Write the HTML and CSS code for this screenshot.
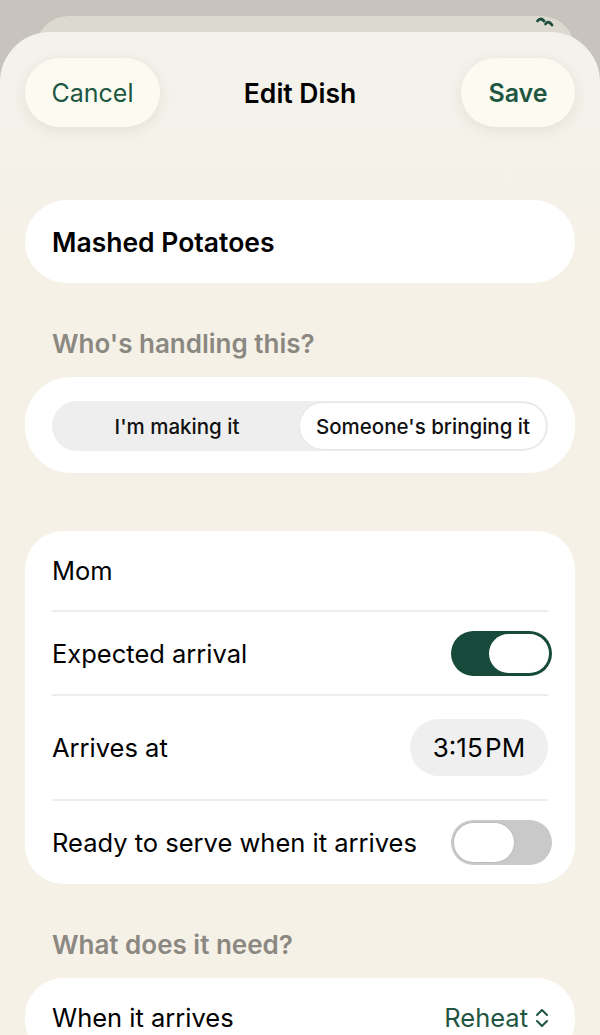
FILE: index.html
```html
<!DOCTYPE html>
<html lang="en">
<head>
  <meta charset="UTF-8" />
  <meta name="viewport" content="width=device-width, initial-scale=1.0" />
  <title>Edit Dish</title>
  <link rel="stylesheet" href="styles.css">
</head>
<body>
  <div class="back-sheet">
    <svg class="peek-icon" width="18" height="12" viewBox="0 0 18 12">
      <path d="M1.5 4 Q4.5 0 8 4" fill="none" stroke="#1d4d3c" stroke-width="2.8" stroke-linecap="round" />
      <path d="M9.5 7 Q12.5 3 16 8" fill="none" stroke="#1d4d3c" stroke-width="2.8" stroke-linecap="round" />
    </svg>
  </div>

  <main class="sheet">
    <header class="nav">
      <button class="nav-btn cancel">Cancel</button>
      <h1 class="nav-title">Edit Dish</h1>
      <button class="nav-btn save">Save</button>
    </header>

    <div class="card name-field">Mashed Potatoes</div>

    <h2 class="section-title">Who's handling this?</h2>
    <div class="card segment-card">
      <div class="segmented">
        <div class="segment">I'm making it</div>
        <div class="segment active">Someone's bringing it</div>
      </div>
    </div>

    <div class="card list-card">
      <div class="row row-name">Mom</div>
      <div class="row row-toggle">
        <span>Expected arrival</span>
        <div class="toggle on"><div class="knob"></div></div>
      </div>
      <div class="row row-time">
        <span>Arrives at</span>
        <div class="time-pill">3:15&#8202;PM</div>
      </div>
      <div class="row row-last">
        <span>Ready to serve when it arrives</span>
        <div class="toggle off"><div class="knob"></div></div>
      </div>
    </div>

    <h2 class="section-title">What does it need?</h2>
    <div class="card list-card">
      <div class="row row-name">
        <span>When it arrives</span>
        <span class="picker">Reheat
          <svg width="16" height="24" viewBox="0 0 16 24">
            <path d="M3 9 L8 4 L13 9" fill="none" stroke="#1f5642" stroke-width="2" stroke-linecap="round" stroke-linejoin="round" />
            <path d="M3 15 L8 20 L13 15" fill="none" stroke="#1f5642" stroke-width="2" stroke-linecap="round" stroke-linejoin="round" />
          </svg>
        </span>
      </div>
    </div>
  </main>
</body>
</html>
```

FILE: styles.css
```css
* {
  box-sizing: border-box;
  margin: 0;
  padding: 0;
}

body {
  font-family: Inter, "Noto Sans", sans-serif;
  background-color: #c8c4bd;
  color: #111;
  height: 1035px;
  overflow: hidden;
}

.back-sheet {
  position: relative;
  margin: 16px 25px 0 35px;
  height: 50px;
  background-color: #dcd9d1;
  border-radius: 34px 34px 0 0;
}

.peek-icon {
  position: absolute;
  top: 1px;
  right: 21px;
}

.sheet {
  position: relative;
  margin-top: -34px;
  min-height: 1100px;
  background: linear-gradient(#f3f2ec, #f5f1e7 220px);
  border-radius: 50px 50px 0 0;
  padding: 26px 25px 0;
}

.nav {
  display: grid;
  grid-template-columns: 1fr auto 1fr;
  align-items: center;
}

.nav-btn {
  height: 69px;
  border: none;
  border-radius: 35px;
  background-color: #fcfbf2;
  box-shadow: 0 3px 14px rgba(80, 70, 40, 0.09);
  font-family: inherit;
  font-size: 25px;
  color: #1f5642;
}

.cancel {
  justify-self: start;
  width: 135px;
}

.save {
  justify-self: end;
  width: 114px;
  font-weight: 600;
}

.nav-title {
  font-size: 26.5px;
  font-weight: 600;
  color: #000;
}

.card {
  background-color: #fff;
  border-radius: 42px;
}

.name-field {
  margin-top: 73px;
  height: 83px;
  display: flex;
  align-items: center;
  padding-left: 27px;
  font-size: 26.5px;
  font-weight: 600;
  color: #000;
}

.section-title {
  margin: 46px 0 18px 27px;
  font-size: 26px;
  font-weight: 600;
  color: #8b8882;
  line-height: 30px;
}

.segment-card {
  padding: 24px 27px 22px;
  border-radius: 46px;
}

.segmented {
  display: flex;
  height: 50px;
  padding: 2px;
  background-color: #eeeeee;
  border-radius: 25px;
}

.segment {
  flex: 1;
  display: flex;
  align-items: center;
  justify-content: center;
  font-size: 20.5px;
  font-weight: 500;
  color: #111;
  border-radius: 23px;
}

.segment.active {
  background-color: #fff;
  box-shadow: 0 0 0 1px #e6e6e6;
}

.list-card {
  margin-top: 58px;
  padding: 0 27px;
  border-radius: 38px;
}

.section-title + .list-card {
  margin-top: 0;
}

.row {
  display: flex;
  align-items: center;
  justify-content: space-between;
  font-size: 25.5px;
  color: #000;
  border-bottom: 2px solid #ededed;
}

.row-name {
  height: 81px;
}

.row-toggle {
  height: 84px;
}

.row-time {
  height: 105px;
}

.row-last {
  height: 83px;
  border-bottom: none;
}

.toggle {
  display: flex;
  align-items: center;
  width: 101px;
  height: 45px;
  margin-right: -4px;
  padding: 3px;
  border-radius: 23px;
}

.toggle .knob {
  width: 60px;
  height: 39px;
  border-radius: 20px;
  background-color: #fff;
}

.toggle.on {
  background-color: #174a3a;
  justify-content: flex-end;
}

.toggle.off {
  background-color: #c9c9c9;
  justify-content: flex-start;
}

.toggle.off .knob {
  box-shadow: 0 0 0 1px #bdbdbd;
}

.time-pill {
  width: 138px;
  height: 57px;
  display: flex;
  align-items: center;
  justify-content: center;
  background-color: #efefef;
  border-radius: 29px;
  font-size: 26px;
  color: #000;
}

.picker {
  display: flex;
  align-items: center;
  gap: 6px;
  margin-right: -2px;
  color: #1f5642;
}
```
